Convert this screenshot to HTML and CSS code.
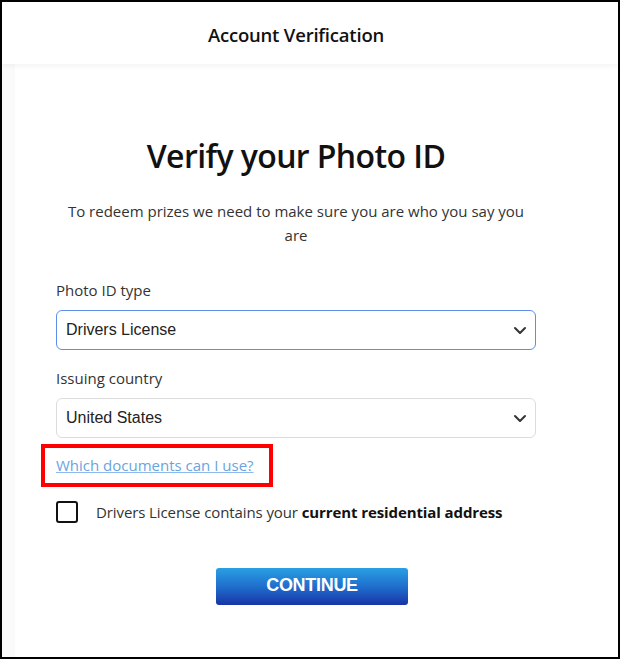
FILE: index.html
```html
<!DOCTYPE html>
<html lang="en">
<head>
<meta charset="utf-8">
<title>Account Verification</title>
<link rel="stylesheet" href="styles.css">
</head>
<body>
<div class="frame">
  <header class="topbar">
    <div class="topbar-title">Account Verification</div>
  </header>
  <main class="page">
    <div class="form">
      <h1 class="title">Verify your Photo ID</h1>
      <p class="intro">To redeem prizes we need to make sure you are who you say you are</p>

      <label class="label">Photo ID type</label>
      <div class="select select-active">
        <span class="select-value">Drivers License</span>
        <svg class="chev" width="14" height="9" viewBox="0 0 14 9"><path d="M2 2l5 5 5-5" fill="none" stroke="#333" stroke-width="2" stroke-linecap="round" stroke-linejoin="round"/></svg>
      </div>

      <label class="label">Issuing country</label>
      <div class="select">
        <span class="select-value">United States</span>
        <svg class="chev" width="14" height="9" viewBox="0 0 14 9"><path d="M2 2l5 5 5-5" fill="none" stroke="#333" stroke-width="2" stroke-linecap="round" stroke-linejoin="round"/></svg>
      </div>

      <div class="link-row">
        <a class="doc-link" href="#">Which documents can I use?</a>
      </div>

      <div class="check-row">
        <span class="checkbox"></span>
        <span class="check-text">Drivers License contains your <b>current residential address</b></span>
      </div>

      <div class="btn-row">
        <button class="btn">CONTINUE</button>
      </div>
    </div>
  </main>
</div>
</body>
</html>
```

FILE: styles.css
```css
* { box-sizing: border-box; }
html, body { margin: 0; padding: 0; background: #fff; }
body {
  font-family: "Open Sans", "Noto Sans", sans-serif;
  color: #222;
}
.frame {
  width: 620px;
  height: 659px;
  border: 2px solid #000;
  overflow: hidden;
  display: flex;
  flex-direction: column;
  background: linear-gradient(to right, #fafafa 13px, #fff 13px);
}
.topbar {
  height: 62px;
  flex: 0 0 62px;
  background: #fff;
  box-shadow: 0 2px 6px rgba(0,0,0,0.05);
  position: relative;
  z-index: 1;
  width: 616px;
}
.topbar-title {
  width: 588px;
  height: 62px;
  padding-top: 2px;
  display: flex;
  align-items: center;
  justify-content: center;
  font-size: 18.5px;
  font-weight: 600;
  color: #111;
  letter-spacing: -0.2px;
}
.page {
  flex: 1;
  padding-left: 54px;
}
.form {
  width: 480px;
  display: flex;
  flex-direction: column;
}
.title {
  margin: 72px 0 0;
  font-size: 32px;
  font-weight: 600;
  text-align: center;
  color: #111;
  line-height: 40px;
  letter-spacing: -0.6px;
}
.intro {
  margin: 23px 0 0;
  font-size: 15px;
  line-height: 24px;
  text-align: center;
  color: #333;
  padding: 0 6px;
}
.label {
  margin-top: 33px;
  font-size: 15px;
  line-height: 20px;
  color: #333;
}
.select {
  margin-top: 10px;
  height: 40px;
  border: 1px solid #dcdcdc;
  border-radius: 6px;
  display: flex;
  align-items: center;
  justify-content: space-between;
  padding: 0 8px 0 9px;
}
.select-active {
  border-color: #5b8fe8;
}
.select + .label { margin-top: 18px; }
.select-value {
  font-family: "Liberation Sans", Arial, sans-serif;
  font-size: 16px;
  color: #222;
}
.chev { display: block; margin-top: 1px; }
.link-row {
  margin: 6px 0 0 -15px;
  align-self: flex-start;
  border: 4px solid #f00;
  padding: 7px 15px 8px 11px;
  line-height: 20px;
}
.doc-link {
  font-size: 15px;
  color: #6aa4e2;
  text-decoration: underline;
  text-decoration-color: #8fb9ea;
}
.check-row {
  margin-top: 14px;
  display: flex;
  align-items: center;
  gap: 18px;
}
.checkbox {
  width: 22px;
  height: 22px;
  border: 2px solid #111;
  border-radius: 3px;
  flex: 0 0 22px;
}
.check-text {
  font-size: 15px;
  color: #333;
  letter-spacing: -0.1px;
}
.check-text b { color: #111; font-weight: 700; }
.btn-row {
  margin-top: 45px;
  display: flex;
  padding-left: 160px;
}
.btn {
  width: 192px;
  height: 37px;
  border: 0;
  border-radius: 3px;
  background: linear-gradient(to bottom, #2a9fe2 0%, #1f6fcd 50%, #1934a6 100%);
  color: #fff;
  font-family: "Liberation Sans", Arial, sans-serif;
  font-weight: 700;
  font-size: 18px;
  letter-spacing: -0.3px;
  padding: 0;
  padding-bottom: 2px;
}
```
